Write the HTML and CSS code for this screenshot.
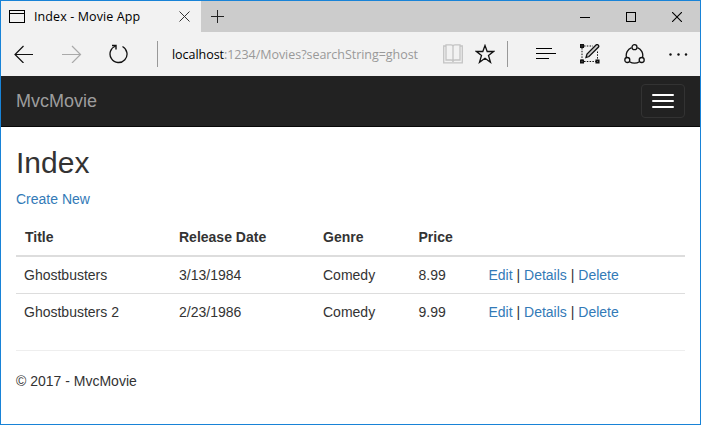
FILE: index.html
```html
<!DOCTYPE html>
<html lang="en">
<head>
<meta charset="utf-8">
<title>Index - Movie App</title>
<link rel="stylesheet" href="styles.css">
</head>
<body>
<div class="window">
  <div class="tabbar">
    <div class="tab">
      <svg class="tab-icon" width="16" height="13" viewBox="0 0 16 13" fill="none" stroke="#000" shape-rendering="crispEdges"><path d="M.5.5h15v12H.5zM.5 3.5h15"/></svg>
      <span class="tab-title">Index - Movie App</span>
      <svg class="tab-close" width="11" height="11" viewBox="0 0 11 11" fill="none" stroke="#333"><path d="M.5.5l10 10M10.5.5l-10 10"/></svg>
    </div>
    <svg class="new-tab" width="13" height="13" viewBox="0 0 13 13" fill="none" stroke="#222" shape-rendering="crispEdges"><path d="M6.5 0v13M0 6.5h13"/></svg>
    <div class="controls">
      <svg width="10" height="10" viewBox="0 0 10 10" fill="none" stroke="#000" shape-rendering="crispEdges"><path d="M0 5.5h10"/></svg>
      <svg width="10" height="10" viewBox="0 0 10 10" fill="none" stroke="#000" shape-rendering="crispEdges"><path d="M.5.5h9v9h-9z"/></svg>
      <svg width="10" height="10" viewBox="0 0 10 10" fill="none" stroke="#000" stroke-width="1.1"><path d="M0 0l10 10M10 0L0 10"/></svg>
    </div>
  </div>
  <div class="toolbar">
    <svg class="back" width="20" height="18" viewBox="0 0 20 18" fill="none" stroke="#111" stroke-width="1.2"><path d="M19 9.5H1M9.5 1L1 9.5 9.5 18"/></svg>
    <svg class="forward" width="20" height="18" viewBox="0 0 20 18" fill="none" stroke="#aaa" stroke-width="1.2"><path d="M0 9.5h18M10 1l8.500 8.500L10 18"/></svg>
    <svg class="refresh" width="20" height="20" viewBox="0 0 20 20" fill="none" stroke="#111" stroke-width="1.3"><path d="M13.500 2.500A8.500 8.500 0 1 1 6.700 2"/><path d="M3 1.500h4v4" stroke-width="1.4"/></svg>
    <span class="divider"></span>
    <div class="address"><span class="host">localhost</span>:1234/Movies?searchString=ghost</div>
    <svg class="book" width="20" height="20" viewBox="0 0 20 20" fill="none" stroke="#c4c4c4" stroke-width="1.3"><path d="M3 2H.7v16.800h18.600V2H17"/><path d="M3 .8h5Q10 .8 10 2.500q0-1.700 2-1.700h5v15.200h-5q-2 0-2 2 0-2-2-2H3zM10 2.500V18"/></svg>
    <svg class="star" width="20" height="20" viewBox="0 0 20 20" fill="none" stroke="#111" stroke-width="1.3"><path d="M10 1.500l2.200 6h6.300l-5 4 2 6.800L10 14.200l-5.500 4.100 2-6.800-5-4h6.300z"/></svg>
    <span class="divider"></span>
    <svg class="hub" width="20" height="12" viewBox="0 0 20 12" fill="none" stroke="#000" shape-rendering="crispEdges"><path d="M0 .5h16M0 5.500h20M0 10.500h13"/></svg>
    <svg class="note" width="20" height="20" viewBox="0 0 20 20" fill="none" stroke="#111"><path d="M4 2h9M4 17.500h12M2 4v12M17.500 7.500V16" stroke-width="1" stroke-dasharray="1.500 1.300"/><path d="M.8.8h2.400v2.400H.8zM.8 16.300h2.400v2.400H.8zM16.300 16.300h2.400v2.400h-2.400z" stroke-width="1.700"/><path d="M6 13.500l1-3.500L16 1q1.200-1 2.300.1 1 1 0 2.200L9 12.500z" fill="#ccc" stroke-width="1.300"/></svg>
    <svg class="share" width="21" height="21" viewBox="0 0 21 21" fill="none" stroke="#111" stroke-width="1.300"><path d="M7.500 3.700A8.200 8.200 0 0 0 2.500 13.500M13.500 3.700a8.200 8.200 0 0 1 5 9.800M5.500 17.700q5 3 10 0"/><circle cx="10.500" cy="3.200" r="2.500"/><circle cx="3.300" cy="16" r="2.500"/><circle cx="17.700" cy="16" r="2.500"/></svg>
    <svg class="more" width="19" height="3" viewBox="0 0 19 3" fill="#111"><circle cx="1.500" cy="1.500" r="1.200"/><circle cx="9.500" cy="1.500" r="1.200"/><circle cx="17" cy="1.500" r="1.200"/></svg>
  </div>
  <nav class="navbar">
    <a class="brand">MvcMovie</a>
    <button class="toggle" aria-label="Toggle navigation"><span></span><span></span><span></span></button>
  </nav>
  <main class="content">
    <h2>Index</h2>
    <p class="create"><a>Create New</a></p>
    <table>
      <colgroup><col class="c-title"><col class="c-date"><col class="c-genre"><col class="c-price"><col></colgroup>
      <thead><tr><th>Title</th><th>Release Date</th><th>Genre</th><th>Price</th><th></th></tr></thead>
      <tbody>
        <tr><td>Ghostbusters</td><td>3/13/1984</td><td>Comedy</td><td>8.99</td><td><a>Edit</a> | <a>Details</a> | <a>Delete</a></td></tr>
        <tr><td>Ghostbusters 2</td><td>2/23/1986</td><td>Comedy</td><td>9.99</td><td><a>Edit</a> | <a>Details</a> | <a>Delete</a></td></tr>
      </tbody>
    </table>
    <hr>
    <footer>© 2017 - MvcMovie</footer>
  </main>
</div>
</body>
</html>
```
FILE: styles.css
```css
* { box-sizing: border-box; }
body { margin: 0; }
svg { display: block; flex: none; }
.window {
  height: 425px;
  border: 1px solid #1883d7;
  background: #fff;
  overflow: hidden;
  font: 14px/20px "Liberation Sans", Arial, sans-serif;
  color: #333;
}
.tabbar {
  display: flex;
  align-items: center;
  height: 31px;
  background: #ccc;
}
.tab {
  display: flex;
  align-items: center;
  width: 200px;
  height: 31px;
  padding-left: 8px;
  background: #f2f2f2;
}
.tab-title {
  width: 145px;
  margin-left: 9px;
  font: 12.5px/16px "Open Sans", "Noto Sans", sans-serif;
  letter-spacing: 0.1px;
  color: #000;
  white-space: nowrap;
}
.new-tab { margin-left: 10px; }
.controls {
  display: flex;
  gap: 36px;
  margin-left: auto;
  padding-right: 18px;
}
.toolbar {
  display: flex;
  align-items: center;
  height: 44px;
  padding-left: 13px;
  background: #f2f2f2;
}
.forward { margin-left: 28px; }
.refresh { margin-left: 27px; }
.divider {
  width: 1px;
  height: 26px;
  background: #999;
}
.refresh + .divider { margin-left: 28px; }
.address {
  width: 271px;
  padding: 2px 0 0 14px;
  font: 12.5px/18px "Open Sans", "Noto Sans", sans-serif;
  letter-spacing: -0.04px;
  color: #999;
  white-space: nowrap;
}
.host { color: #000; }
.book { margin-left: 14px; }
.star { margin-left: 12px; }
.star + .divider { margin-left: 12px; }
.hub { margin-left: 28px; }
.note { margin-left: 24px; }
.share { margin-left: 24px; }
.more { margin-left: 24px; }
.navbar {
  display: flex;
  align-items: center;
  justify-content: space-between;
  height: 51px;
  padding: 0 15px;
  background: #222;
  border-bottom: 1px solid #080808;
}
.brand { font-size: 18px; }
.toggle {
  display: flex;
  flex-direction: column;
  gap: 4px;
  width: 44px;
  height: 34px;
  padding: 9px 10px;
  background: none;
  border: 1px solid #333;
  border-radius: 4px;
}
.toggle span {
  width: 22px;
  height: 2px;
  border-radius: 1px;
  background: #fff;
}
.content { padding: 19px 15px 0; }
h2 { margin: 0 0 10px; font-size: 30px; font-weight: 500; line-height: 33px; }
.create { margin: 0 0 10px; }
a { color: #337ab7; }
.navbar .brand { color: #9d9d9d; }
table {
  width: 100%;
  table-layout: fixed;
  border-spacing: 0;
}
.c-title { width: 155px; }
.c-date { width: 144px; }
.c-genre { width: 95.500px; }
.c-price { width: 70px; }
th, td { padding: 8px; text-align: left; }
th { border-bottom: 2px solid #ddd; }
th:first-child { padding-left: 9px; }
tr + tr td { border-top: 1px solid #ddd; }
hr { margin: 20px 0; border: 0; border-top: 1px solid #eee; }
```
